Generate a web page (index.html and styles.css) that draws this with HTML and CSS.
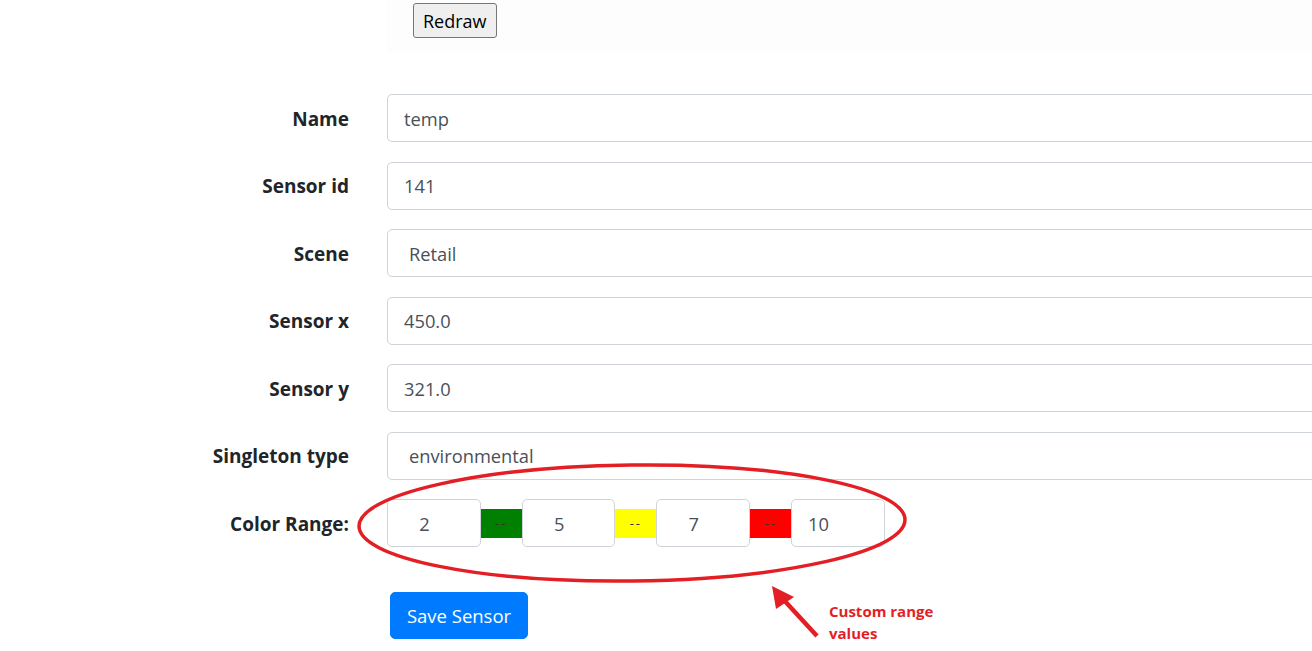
FILE: index.html
```html
<!DOCTYPE html>
<html>
<head>
<meta charset="utf-8">
<link rel="stylesheet" href="styles.css">
</head>
<body>
<div class="page">
  <div class="toolbar">
    <button class="redraw" type="button">Redraw</button>
  </div>
  <form class="sensor-form">
    <label class="lbl">Name</label>
    <input class="field" type="text" value="temp">
    <label class="lbl">Sensor id</label>
    <input class="field" type="text" value="141">
    <label class="lbl">Scene</label>
    <input class="field sel" type="text" value="Retail">
    <label class="lbl">Sensor x</label>
    <input class="field" type="text" value="450.0">
    <label class="lbl">Sensor y</label>
    <input class="field" type="text" value="321.0">
    <label class="lbl">Singleton type</label>
    <input class="field sel" type="text" value="environmental">
    <label class="lbl">Color Range:</label>
    <div class="range">
      <input class="rng" type="text" value="2">
      <span class="seg green">--</span>
      <input class="rng" type="text" value="5">
      <span class="seg yellow">--</span>
      <input class="rng" type="text" value="7">
      <span class="seg red">--</span>
      <input class="rng last" type="text" value="10">
    </div>
    <div></div>
    <div class="actions"><button class="save" type="button">Save Sensor</button></div>
  </form>
  <svg class="annot" width="1312" height="651" viewBox="0 0 1312 651">
    <ellipse cx="632" cy="523" rx="273" ry="58" transform="rotate(-0.7 632 523)" fill="none" stroke="#e31e24" stroke-width="3.5"/>
    <line x1="817" y1="636" x2="782" y2="598" stroke="#e31e24" stroke-width="4.5"/>
    <polygon points="772,586 776,609 794,597" fill="#e31e24"/>
  </svg>
  <div class="note">Custom range<br>values</div>
</div>
</body>
</html>
```
FILE: styles.css
```css
html, body {
  margin: 0;
  padding: 0;
  background: #fff;
  overflow: hidden;
}
body {
  font-family: "Segoe UI", "Open Sans", "Noto Sans", sans-serif;
  color: #212529;
}
.page {
  position: relative;
  width: 1312px;
  height: 651px;
  overflow: hidden;
}
.toolbar {
  margin-left: 387px;
  height: 53px;
  background: #fdfdfd;
  padding: 3px 0 0 26px;
  box-sizing: border-box;
}
.redraw {
  font-family: "Segoe UI", "Open Sans", sans-serif;
  font-size: 18px;
  height: 35px;
  padding: 0 9px;
  background: #efefef;
  border: 1px solid #767676;
  border-radius: 3px;
  color: #000;
}
.sensor-form {
  display: grid;
  grid-template-columns: 349px 1100px;
  column-gap: 38px;
  row-gap: 19.5px;
  margin-top: 41px;
  align-items: center;
}
.lbl {
  text-align: right;
  font-weight: 700;
  font-size: 19px;
  padding-top: 1px;
}
.field {
  box-sizing: border-box;
  height: 48px;
  width: 1100px;
  border: 1px solid #ced4da;
  border-radius: 5px;
  padding: 0 16px;
  font-family: inherit;
  font-size: 18.3px;
  color: #495057;
  background: #fff;
}
.field.sel { padding-left: 21px; }
.range {
  display: flex;
  align-items: center;
}
.rng {
  box-sizing: border-box;
  width: 93.7px;
  height: 48px;
  border: 1px solid #ced4da;
  border-radius: 5px;
  font-family: inherit;
  font-size: 18.3px;
  color: #495057;
  text-align: right;
  padding: 0 50px 0 0;
  background: #fff;
}
.rng.last { text-align: left; padding: 0 0 0 16px; }
.seg {
  width: 41px;
  height: 29px;
  display: flex;
  align-items: center;
  justify-content: center;
  font-size: 13px;
  letter-spacing: 2px;
  color: #333;
}
.green { background: #008000; }
.yellow { background: #ffff00; }
.red { background: #ff0000; }
.actions {
  margin-top: 25px;
  padding-left: 3px;
}
.save {
  font-family: inherit;
  font-size: 18.5px;
  height: 47px;
  width: 138px;
  color: #fff;
  background: #007bff;
  border: 1px solid #007bff;
  border-radius: 5px;
}
.annot {
  position: absolute;
  left: 0;
  top: 0;
  pointer-events: none;
}
.note {
  position: absolute;
  left: 829px;
  top: 600px;
  color: #e31e24;
  font-weight: 700;
  font-size: 15px;
  line-height: 22px;
}
```
